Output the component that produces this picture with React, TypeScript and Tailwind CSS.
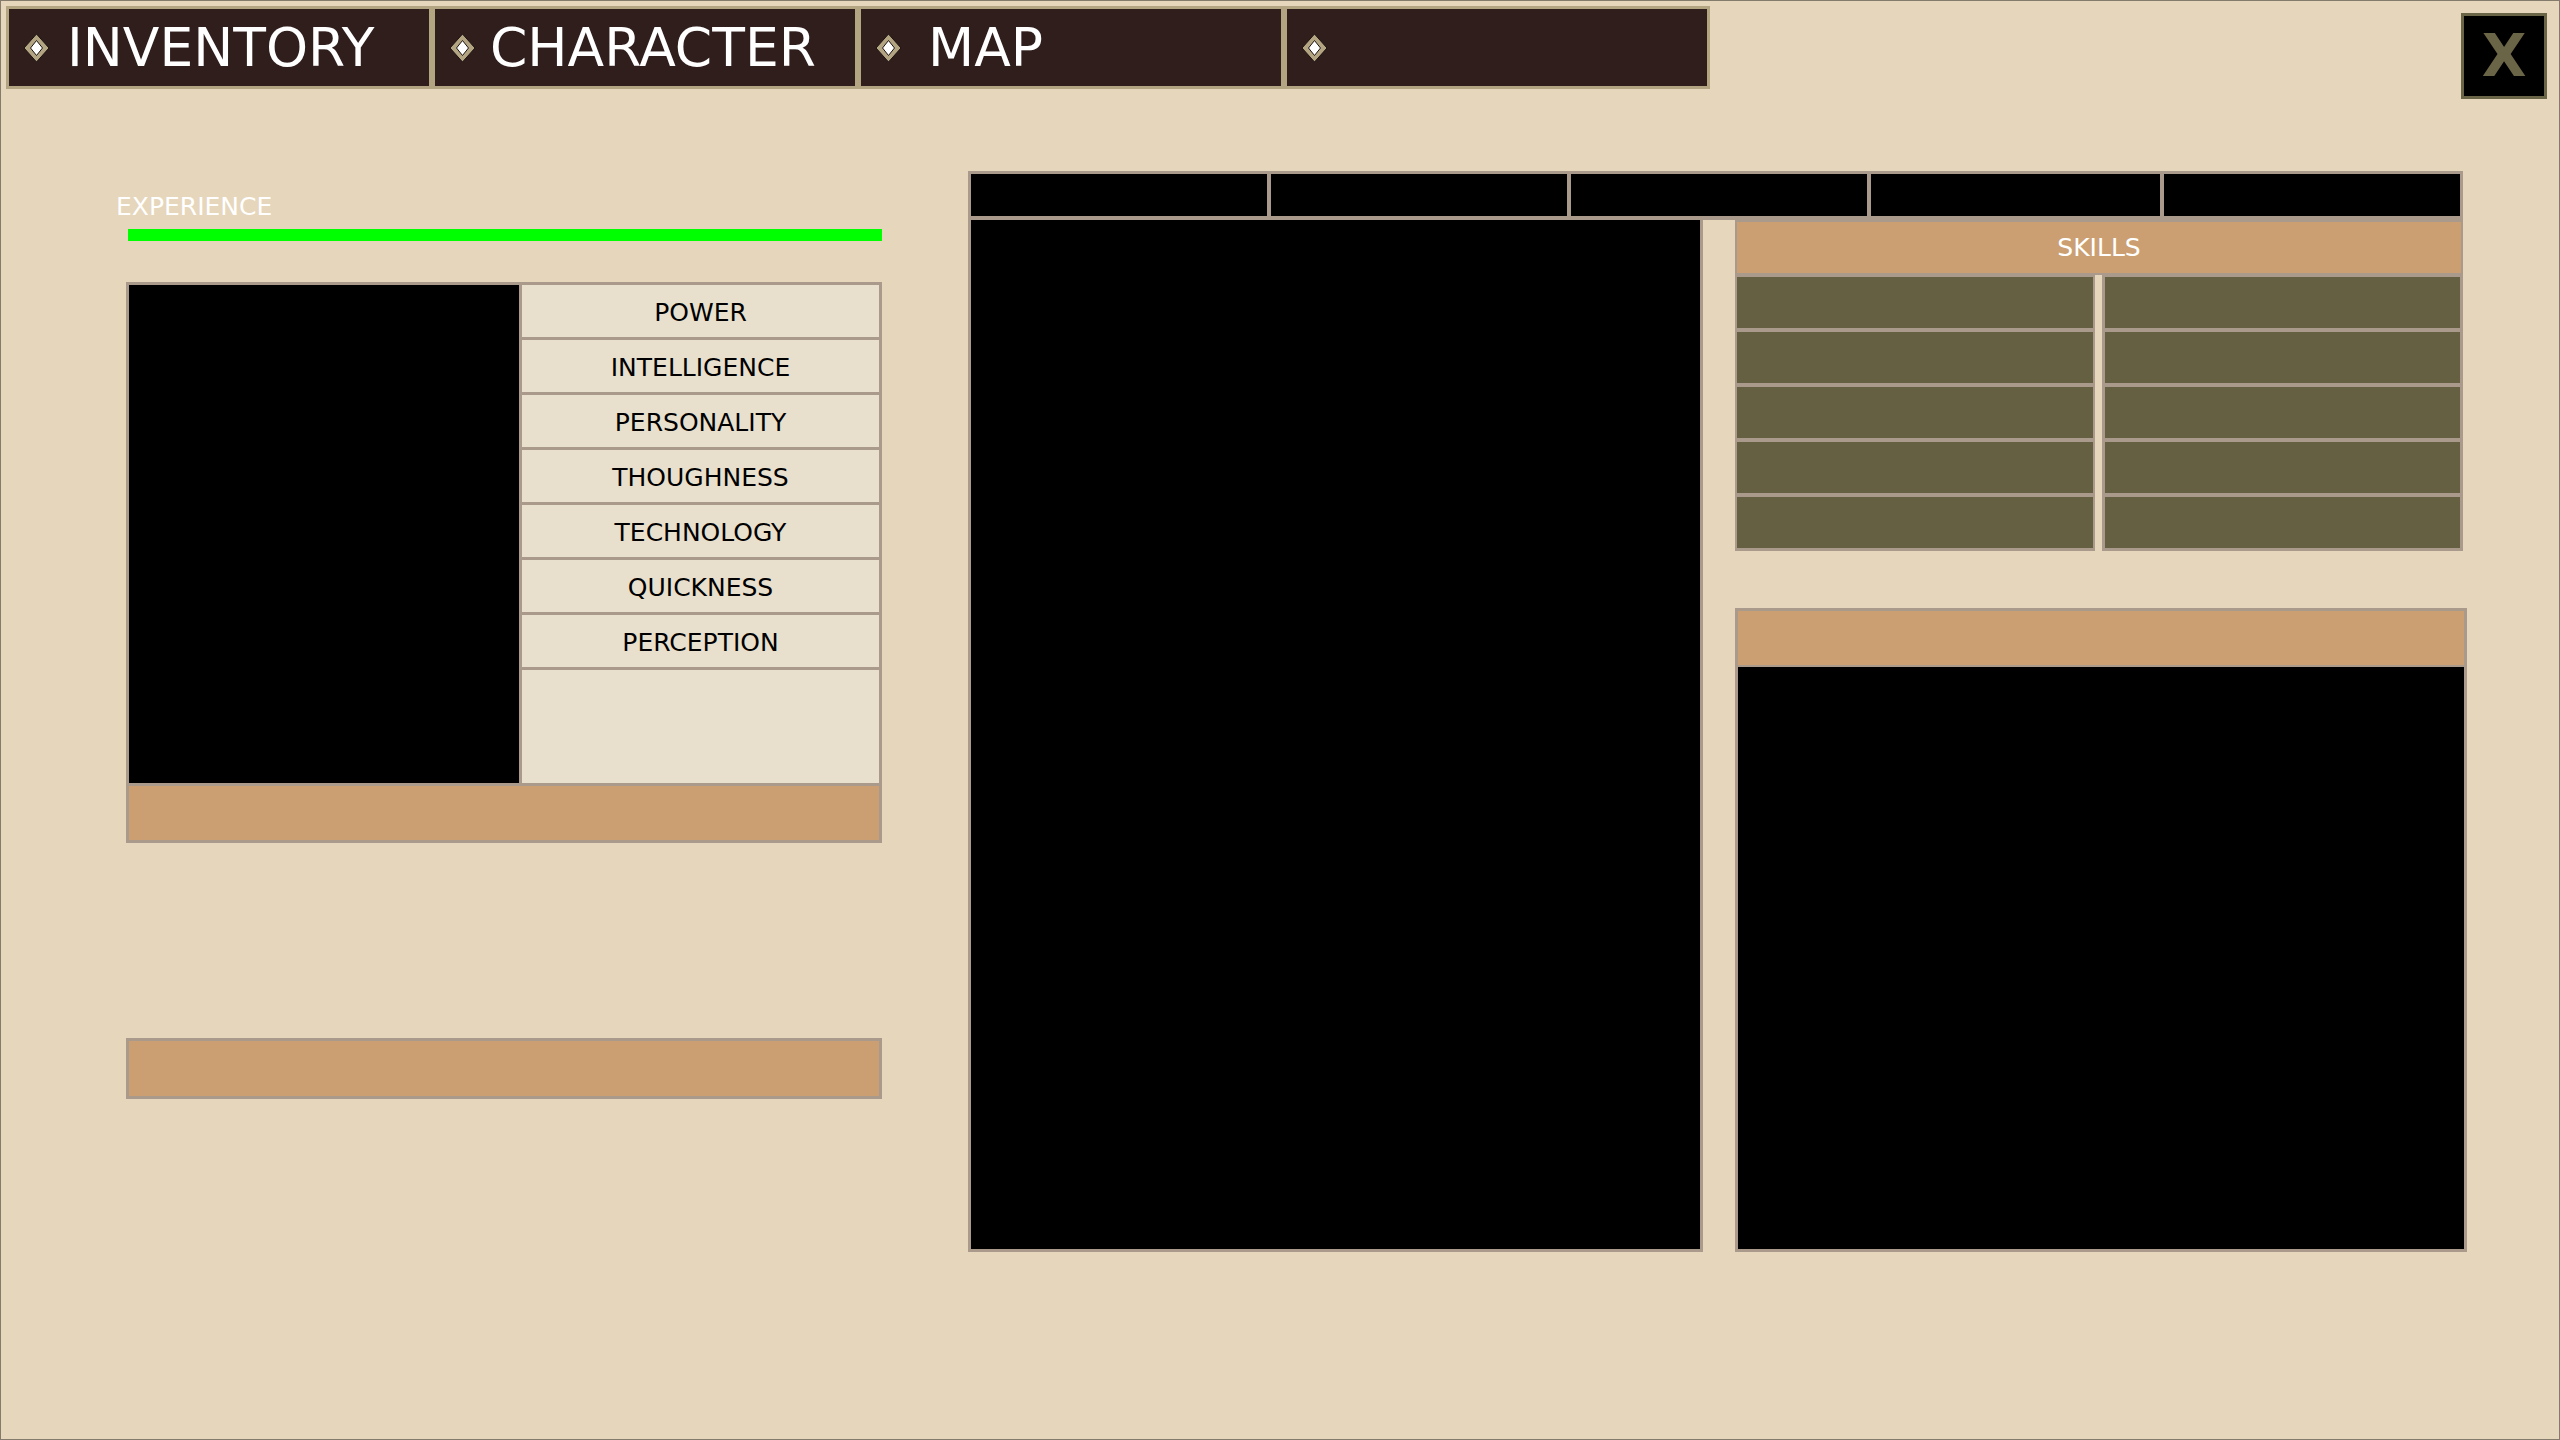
import React from "react";

function Diamond() {
  return (
    <svg width="27" height="30" viewBox="0 0 27 30" className="shrink-0">
      <polygon points="13.5,1 26,15 13.5,29 1,15" fill="#b3a482" stroke="#1c1311" strokeWidth="1" />
      <polygon points="13.5,7.5 19.5,15 13.5,22.5 7.5,15" fill="#ffffff" stroke="#1c1311" strokeWidth="1" />
    </svg>
  );
}

const stats = [
  "POWER",
  "INTELLIGENCE",
  "PERSONALITY",
  "THOUGHNESS",
  "TECHNOLOGY",
  "QUICKNESS",
  "PERCEPTION",
];

export default function App() {
  return (
    <div className="w-[2560px] h-[1440px] border border-[#857b6c] bg-[#e6d6bb] overflow-hidden font-['DejaVu_Sans',sans-serif] flex flex-col">
      {/* Top bar */}
      <div className="h-[100px] shrink-0 flex items-start justify-between pl-[5px] pt-[5px]">
        <div className="flex">
          <div className="w-[426px] h-[83px] border-[3px] border-[#b3a482] bg-[#2f1e1c] flex items-center pl-[14px]">
            <Diamond />
            <span className="ml-[17px] text-white text-[53.5px] leading-none">INVENTORY</span>
          </div>
          <div className="w-[426px] h-[83px] border-[3px] border-[#b3a482] bg-[#2f1e1c] flex items-center pl-[14px]">
            <Diamond />
            <span className="ml-[14px] text-white text-[53.5px] leading-none">CHARACTER</span>
          </div>
          <div className="w-[426px] h-[83px] border-[3px] border-[#b3a482] bg-[#2f1e1c] flex items-center pl-[14px]">
            <Diamond />
            <span className="ml-[26px] text-white text-[53.5px] leading-none">MAP</span>
          </div>
          <div className="w-[426px] h-[83px] border-[3px] border-[#b3a482] bg-[#2f1e1c] flex items-center pl-[14px]">
            <Diamond />
          </div>
        </div>
        <div className="mt-[7px] mr-[12px] w-[86px] h-[86px] border-[3px] border-[#6b6548] bg-black flex items-center justify-center">
          <span className="text-[#6b6548] text-[58px] font-bold leading-none">X</span>
        </div>
      </div>

      {/* Main */}
      <div className="flex items-start">
        {/* Left column */}
        <div className="ml-[114px] w-[767px] pt-[93px] flex flex-col items-start">
          <div className="ml-[1px] text-white text-[25px] leading-[25px]">EXPERIENCE</div>
          <div className="ml-[13px] mt-[10px] w-[754px] h-[12px] bg-[#00ff00]" />
          <div className="ml-[11px] mt-[41px] w-[756px] bg-[#a99a8c] p-[3px] flex flex-col gap-[3px]">
            <div className="flex gap-[3px] h-[498px]">
              <div className="w-[390px] h-full bg-black" />
              <div className="flex-1 flex flex-col gap-[3px]">
                {stats.map((s) => (
                  <div
                    key={s}
                    className="h-[52px] pt-[2px] bg-[#e8dfcc] flex items-center justify-center text-black text-[25px] leading-none"
                  >
                    {s}
                  </div>
                ))}
                <div className="flex-1 bg-[#e8dfcc]" />
              </div>
            </div>
            <div className="h-[54px] bg-[#cb9f71]" />
          </div>
          <div className="ml-[11px] mt-[195px] w-[756px] h-[61px] border-[3px] border-[#a99a8c] bg-[#cb9f71]" />
        </div>

        {/* Right block */}
        <div className="ml-[86px] mt-[70px] flex flex-col">
          <div className="w-[1495px] bg-[#a99a8c] pt-[3px] px-[3px] pb-[4px] flex gap-[4px]">
            <div className="w-[296px] h-[42px] bg-black" />
            <div className="w-[296px] h-[42px] bg-black" />
            <div className="w-[296px] h-[42px] bg-black" />
            <div className="w-[289px] h-[42px] bg-black" />
            <div className="flex-1 h-[42px] bg-black" />
          </div>
          <div className="flex items-start">
            <div className="w-[735px] h-[1032px] bg-black border-[3px] border-t-0 border-[#a99a8c]" />
            <div className="ml-[32px] w-[732px] flex flex-col">
              <div className="w-[728px] h-[55px] border-2 border-[#a99a8c] bg-[#cb9f71] flex items-center justify-center text-white text-[25px] leading-none">
                SKILLS
              </div>
              <div className="w-[728px] flex gap-[7px]">
                <div className="w-[360px] bg-[#a99a8c] px-[2px] pt-[2px] pb-[3px] flex flex-col gap-[4px]">
                  {[0, 1, 2, 3, 4].map((i) => (
                    <div key={i} className="h-[51px] bg-[#666043]" />
                  ))}
                </div>
                <div className="w-[361px] bg-[#a99a8c] px-[3px] pt-[2px] pb-[3px] flex flex-col gap-[4px]">
                  {[0, 1, 2, 3, 4].map((i) => (
                    <div key={i} className="h-[51px] bg-[#666043]" />
                  ))}
                </div>
              </div>
              <div className="mt-[57px] w-[732px] h-[644px] bg-[#a99a8c] p-[3px] flex flex-col gap-[2px]">
                <div className="h-[54px] bg-[#cb9f71]" />
                <div className="flex-1 bg-black" />
              </div>
            </div>
          </div>
        </div>
      </div>
    </div>
  );
}
